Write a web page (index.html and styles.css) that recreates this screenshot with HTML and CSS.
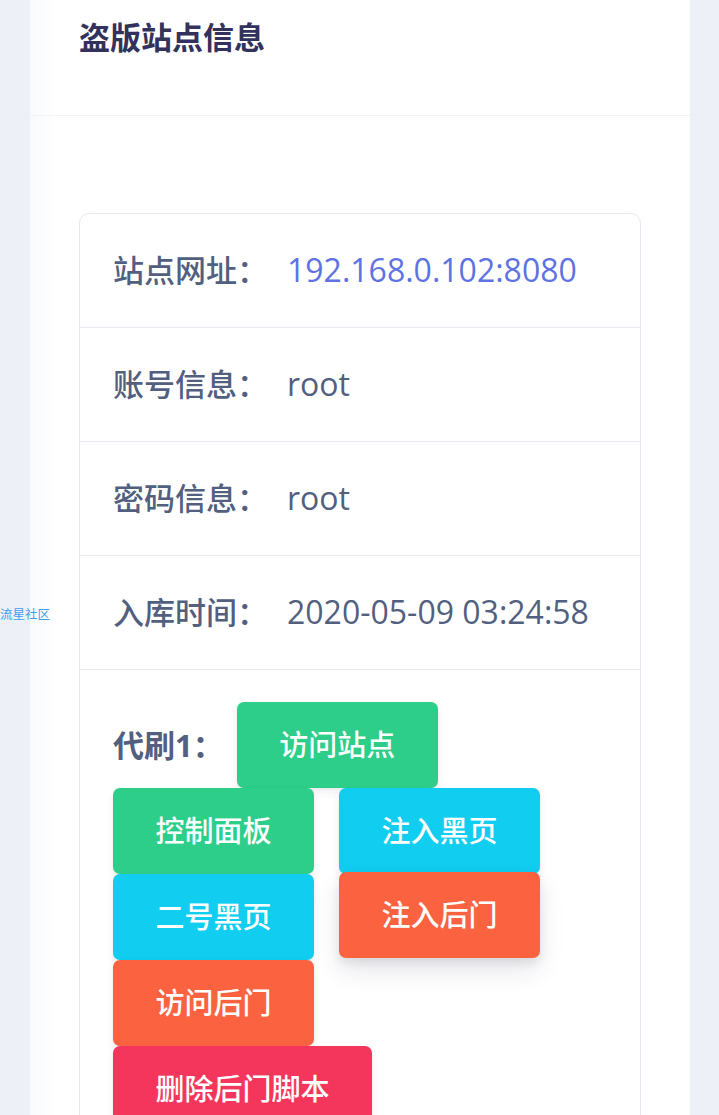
FILE: index.html
```html
<!DOCTYPE html>
<html lang="zh-CN">
<head>
<meta charset="utf-8">
<title>盗版站点信息</title>
<link rel="stylesheet" href="styles.css">
</head>
<body>
<div class="page">
  <div class="card">
    <div class="card-header">
      <h3 class="title">盗版站点信息</h3>
    </div>
    <div class="card-body">
      <ul class="list">
        <li class="item"><span class="label">站点网址：</span><a class="value link">192.168.0.102:8080</a></li>
        <li class="item"><span class="label">账号信息：</span><span class="value">root</span></li>
        <li class="item"><span class="label">密码信息：</span><span class="value">root</span></li>
        <li class="item"><span class="label">入库时间：</span><span class="value">2020-05-09 03:24:58</span></li>
        <li class="item actions">
          <span class="label strong">代刷1：</span>
          <a class="btn btn-success">访问站点</a>
          <a class="btn btn-success">控制面板</a>
          <a class="btn btn-info">注入黑页</a>
          <a class="btn btn-info">二号黑页</a>
          <a class="btn btn-warning lifted">注入后门</a>
          <a class="btn btn-warning">访问后门</a>
          <a class="btn btn-danger">删除后门脚本</a>
        </li>
      </ul>
    </div>
  </div>
</div>
<div class="float-tag">流星社区</div>
</body>
</html>
```

FILE: styles.css
```css
* { box-sizing: border-box; }
html, body { margin: 0; padding: 0; }
body {
  background: #eef0f7;
  font-family: "Open Sans", "Noto Sans CJK SC", sans-serif;
  color: #525f7f;
}
.page {
  padding: 0 29px 0 30px;
}
.card {
  background: linear-gradient(to right, #f9fafc 0, #ffffff 30px);
  min-height: 1200px;
}
.card-header {
  height: 116px;
  padding: 19px 49px 0;
  border-bottom: 1px solid #f1f2f6;
}
.title {
  margin: 0;
  font-size: 31px;
  line-height: 36px;
  font-weight: 700;
  color: #32325d;
}
.card-body {
  padding: 97px 49px 40px;
}
.list {
  list-style: none;
  margin: 0;
  padding: 0;
  border: 1px solid #e6e9ef;
  border-radius: 10px;
}
.item {
  display: flex;
  align-items: center;
  padding: 32px 33px 33px;
  border-bottom: 1px solid #e6e9ef;
  font-size: 31px;
  line-height: 48px;
}
.item:last-child { border-bottom: none; }
.label {
  font-weight: 500;
  color: #525f7f;
  margin-right: 19px;
}
.value {
  font-size: 32px;
  color: #525f7f;
}
.link { color: #5e72e4; text-decoration: none; }
.actions {
  flex-wrap: wrap;
  padding-right: 33px;
  padding-bottom: 40px;
}
.label.strong {
  font-weight: 700;
  margin-right: 13px;
}
.btn {
  display: inline-flex;
  align-items: center;
  justify-content: center;
  height: 86px;
  padding: 0 42.5px;
  margin-right: 25px;
  border-radius: 7px;
  color: #fff;
  font-size: 29px;
  font-weight: 500;
  text-decoration: none;
  box-shadow: 0 4px 8px rgba(50, 50, 93, 0.08), 0 1px 3px rgba(0, 0, 0, 0.05);
}
.btn-success { background: #2dce89; }
.btn-info { background: #11cdef; }
.btn-warning { background: #fb6340; }
.btn-danger { background: #f5365c; }
.lifted {
  transform: translateY(-2px);
  box-shadow: 0 12px 24px rgba(50, 50, 93, 0.12), 0 5px 10px rgba(0, 0, 0, 0.08);
}
.float-tag {
  position: absolute;
  left: 0;
  top: 606px;
  font-size: 12.5px;
  line-height: 16px;
  color: #3f9ef2;
  font-family: "Noto Sans CJK SC", sans-serif;
}
```
